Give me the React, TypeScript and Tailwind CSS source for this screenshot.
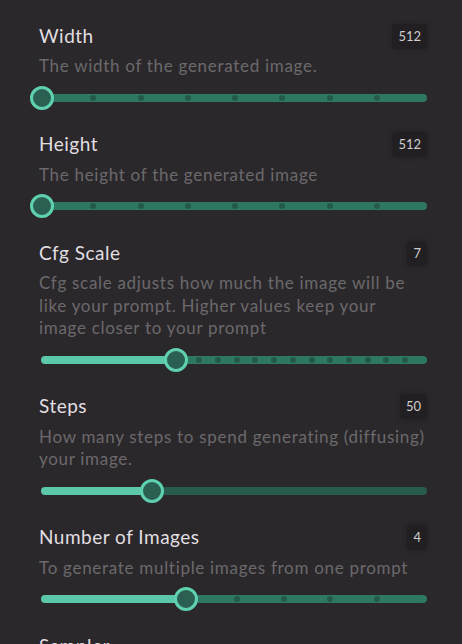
import React from 'react';

type Setting = {
  label: string;
  desc: string[];
  badge: string;
  value: number;
  min: number;
  max: number;
  dots: boolean;
};

const SETTINGS: Setting[] = [
  { label: 'Width', desc: ['The width of the generated image.'], badge: '512', value: 0, min: 0, max: 8, dots: true },
  { label: 'Height', desc: ['The height of the generated image'], badge: '512', value: 0, min: 0, max: 8, dots: true },
  {
    label: 'Cfg Scale',
    desc: [
      'Cfg scale adjusts how much the image will be',
      'like your prompt. Higher values keep your',
      'image closer to your prompt',
    ],
    badge: '7',
    value: 7,
    min: 0,
    max: 20,
    dots: true,
  },
  {
    label: 'Steps',
    desc: ['How many steps to spend generating (diffusing)', 'your image.'],
    badge: '50',
    value: 50,
    min: 10,
    max: 150,
    dots: false,
  },
  {
    label: 'Number of Images',
    desc: ['To generate multiple images from one prompt'],
    badge: '4',
    value: 4,
    min: 1,
    max: 9,
    dots: true,
  },
];

const TRACK_W = 384;

function Slider({ s }: { s: Setting }) {
  const steps = s.max - s.min;
  const done = s.value - s.min;
  const pos = (done / steps) * TRACK_W;
  const rest = steps - done;
  return (
    <div className="relative flex h-6 w-[386px] items-center">
      <div className="flex h-2 w-full overflow-hidden rounded-full">
        <div className="h-full shrink-0 bg-[#5bc8a9]" style={{ width: pos + 2 }} />
        <div
          className={`flex h-full flex-1 items-center justify-between ${s.dots ? 'bg-[#2e7763]' : 'bg-[#275c4f]'}`}
        >
          {s.dots &&
            Array.from({ length: rest + 1 }, (_, k) => (
              <span
                key={k}
                className={`h-[6px] w-[6px] rounded-full ${k === 0 || k === rest ? 'bg-transparent' : 'bg-[#245a4c]'}`}
              />
            ))}
        </div>
      </div>
      <span
        className="absolute top-0 h-6 w-6 rounded-full border-[3px] border-[#5fd0b0] bg-[#2b5f52]"
        style={{ left: pos - 11 }}
      />
    </div>
  );
}

export default function App() {
  return (
    <div className="flex min-h-screen w-[462px] flex-col gap-[21px] overflow-hidden bg-[#2a282b] pl-[39px] pr-[33px] pt-[22px] font-['Lato',sans-serif]">
      {SETTINGS.map(s => (
        <div key={s.label} className="flex flex-col">
          <div className="flex h-7 items-center justify-between pr-[2px]">
            <span className="text-[19px] tracking-[0.5px] text-[#e2dfe1]">{s.label}</span>
            <span className="rounded-sm bg-[#211f22] px-[6px] py-[4px] text-[13px] leading-[17px] text-[#cfcccf] shadow-[0_0_4px_#211f22]">
              {s.badge}
            </span>
          </div>
          <div className="mt-[5px] flex flex-col text-[17px] leading-[22.5px] tracking-[0.7px] text-[#6c696c]">
            {s.desc.map(line => (
              <span key={line} className="whitespace-nowrap">
                {line}
              </span>
            ))}
          </div>
          <div className="mt-[8px] ml-[2px]">
            <Slider s={s} />
          </div>
        </div>
      ))}
      <div className="text-[19px] tracking-[0.5px] text-[#e2dfe1]">Sampler</div>
    </div>
  );
}
